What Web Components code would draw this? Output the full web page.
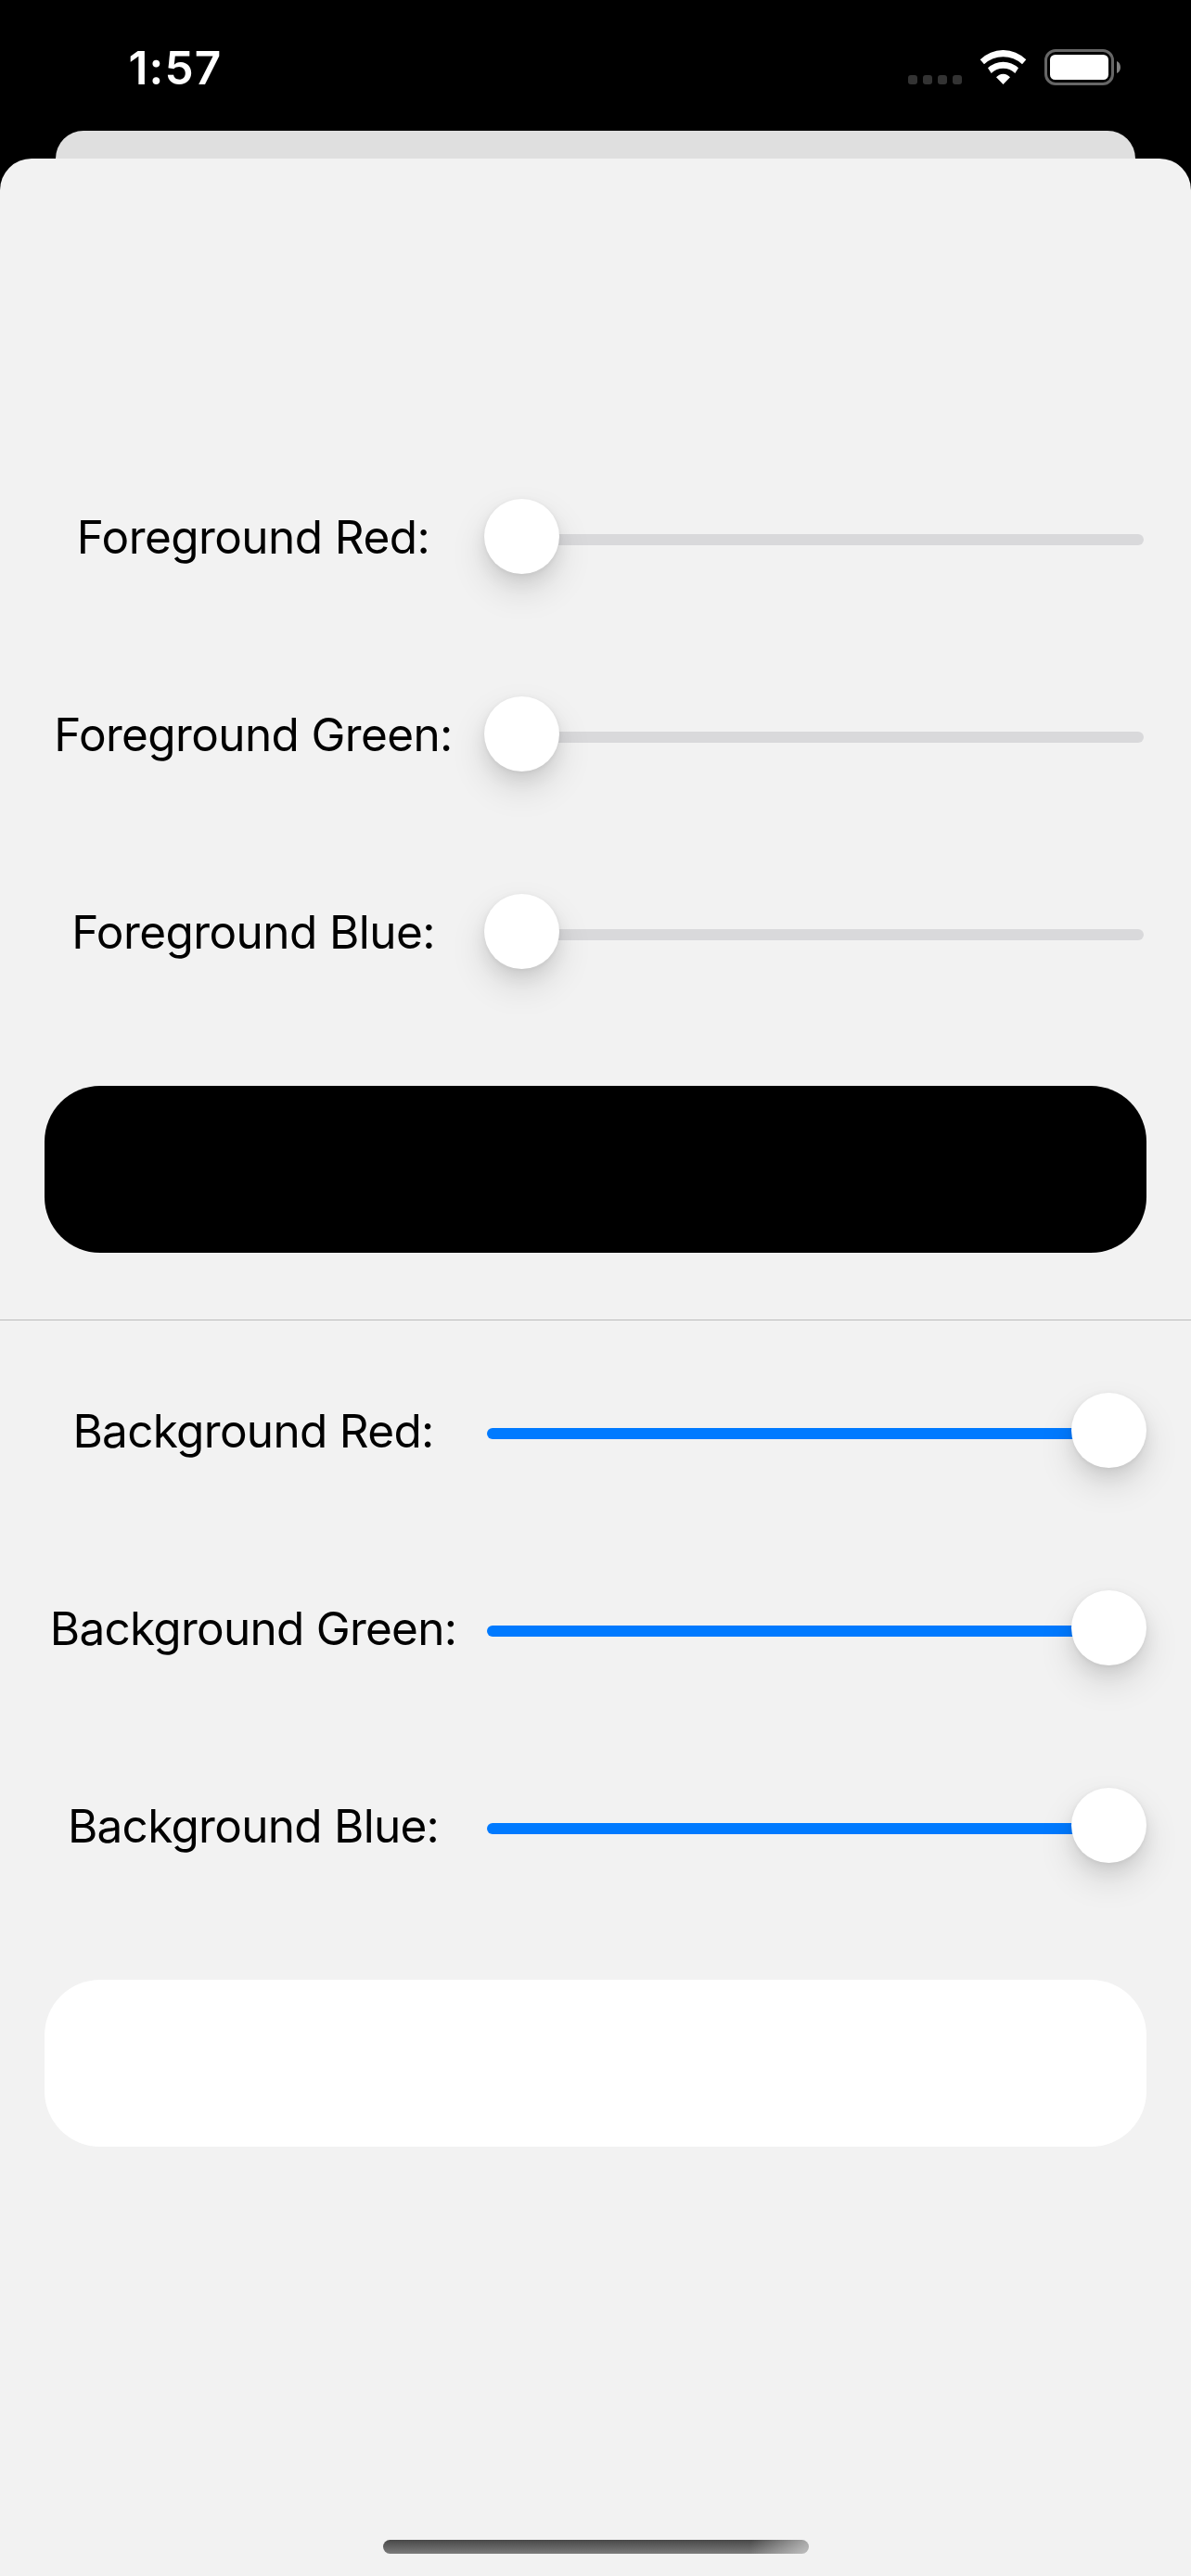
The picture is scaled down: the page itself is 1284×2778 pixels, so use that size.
<!DOCTYPE html>
<html lang="en">
<head>
<meta charset="utf-8">
<title>Colours</title>
<style>
html,body{margin:0;height:100%;background:#000}
body{font-family:Inter,"Liberation Sans",sans-serif;overflow:hidden}
</style>
</head>
<body>
<app-screen>
  <status-bar slot="status">1:57</status-bar>
  <color-row value="0" track="-.56px">Foreground Red:</color-row>
  <color-row value="0" track="-.63px">Foreground Green:</color-row>
  <color-row value="0" track="-.58px">Foreground Blue:</color-row>
  <color-swatch color="#000"></color-swatch>
  <thin-divider></thin-divider>
  <color-row value="1" track="-.7px">Background Red:</color-row>
  <color-row value="1" track="-.74px">Background Green:</color-row>
  <color-row value="1" track="-.73px">Background Blue:</color-row>
  <color-swatch color="#fff"></color-swatch>
  <home-indicator slot="home"></home-indicator>
</app-screen>
<script>
const define = (name, html, setup) => customElements.define(name, class extends HTMLElement {
  constructor() {
    super();
    this.attachShadow({mode: "open"}).innerHTML = html;
  }
  connectedCallback() { if (setup) setup(this, this.shadowRoot); }
});

define("app-screen", `
<style>
:host{display:flex;flex-direction:column;width:1284px;height:2778px;background:#000}
.back{height:30px;margin:0 60px;background:#dfdfdf;border-radius:30px 30px 0 0;flex:none}
.sheet{flex:1;min-height:0;display:flex;flex-direction:column;background:#f2f2f2;border-radius:34px 34px 0 0}
.content{flex:1;min-height:0;display:flex;flex-direction:column;padding-top:301px}
</style>
<slot name="status"></slot>
<div class="back"></div>
<div class="sheet"><div class="content"><slot></slot></div><slot name="home"></slot></div>`);

define("status-bar", `
<style>
:host{display:flex;height:141px;flex:none;box-sizing:border-box;padding:53px 76px 0 138.5px;justify-content:space-between;align-items:flex-start;color:#fff}
.time{font-size:49.5px;font-weight:600;line-height:40px;letter-spacing:1.1px}
.icons{display:flex;align-items:flex-start}
.dots{display:flex;gap:6px;margin:28px 19px 0 0}
.dots i{width:10px;height:10px;border-radius:3px;background:#333}
svg{display:block}
.wifi{margin:1px 19px 0 0}
</style>
<div class="time"><slot></slot></div>
<div class="icons">
<div class="dots"><i></i><i></i><i></i><i></i></div>
<svg class="wifi" width="51" height="37" viewBox="0 0 51 37" fill="#fff"><path d="M.7 10.3A35 35 0 0 1 50.3 10.3L46 15.3A30.2 30.2 0 0 0 5 15.3ZM9 19.3A23.9 23.9 0 0 1 42 19.3L38.3 25A18 18 0 0 0 12.7 25ZM18 29.3A9.6 9.6 0 0 1 33 29.3L25.5 37Z"/></svg>
<svg width="82" height="39" viewBox="0 0 82 39"><rect x="1.5" y="1.5" width="72" height="36" rx="10.5" fill="none" stroke="#666" stroke-width="3"/><rect x="6" y="6" width="63" height="27" rx="5.5" fill="#fff"/><path d="M78 13C83.3 15 83.3 24 78 26Z" fill="#808080"/></svg>
</div>`);

define("color-row", `
<style>
:host{display:flex;height:213px;flex:none;box-sizing:border-box;padding:0 48px;gap:24px;align-items:center}
.label{width:450px;text-align:center;white-space:nowrap;font-size:49.5px;line-height:60px;color:#000}
.slider{flex:1;display:flex;height:81px;align-items:center}
.line{flex:1;height:12px;margin-top:7px;background:#d9d9db}
.thumb{width:81px;height:81px;flex:none;border-radius:50%;background:#fff;box-shadow:0 1px 5px rgba(0,0,0,.06),0 18px 39px rgba(0,0,0,.12),0 9px 18px rgba(0,0,0,.07);z-index:1}
:host([value="0"]) .line{border-radius:0 6px 6px 0;margin-right:3px;margin-left:-20px}
:host([value="1"]) .line{border-radius:6px 0 0 6px;margin-left:3px;margin-right:-20px;background:#007aff;order:-1}
</style>
<div class="label"><slot></slot></div>
<div class="slider"><div class="thumb"></div><div class="line"></div></div>`,
(el, root) => { root.querySelector(".label").style.letterSpacing = el.getAttribute("track"); });

define("color-swatch", `
<style>:host{display:block;flex:none;height:180px;margin:60px 48px 0;border-radius:60px}</style>`,
el => { el.style.background = el.getAttribute("color"); });

define("thin-divider", `
<style>:host{display:block;flex:none;height:1px;margin:72px 0 12px;background:#bbb}</style>`);

define("home-indicator", `
<style>
:host{display:flex;flex:none;justify-content:center;padding-bottom:24px}
.bar{width:459px;height:15px;border-radius:7.5px;background:linear-gradient(100deg,rgba(241,241,241,0) 86%,rgba(241,241,241,.55) 99%),linear-gradient(#484848,#7b7b7b)}
</style><div class="bar"></div>`);
</script>
</body>
</html>
